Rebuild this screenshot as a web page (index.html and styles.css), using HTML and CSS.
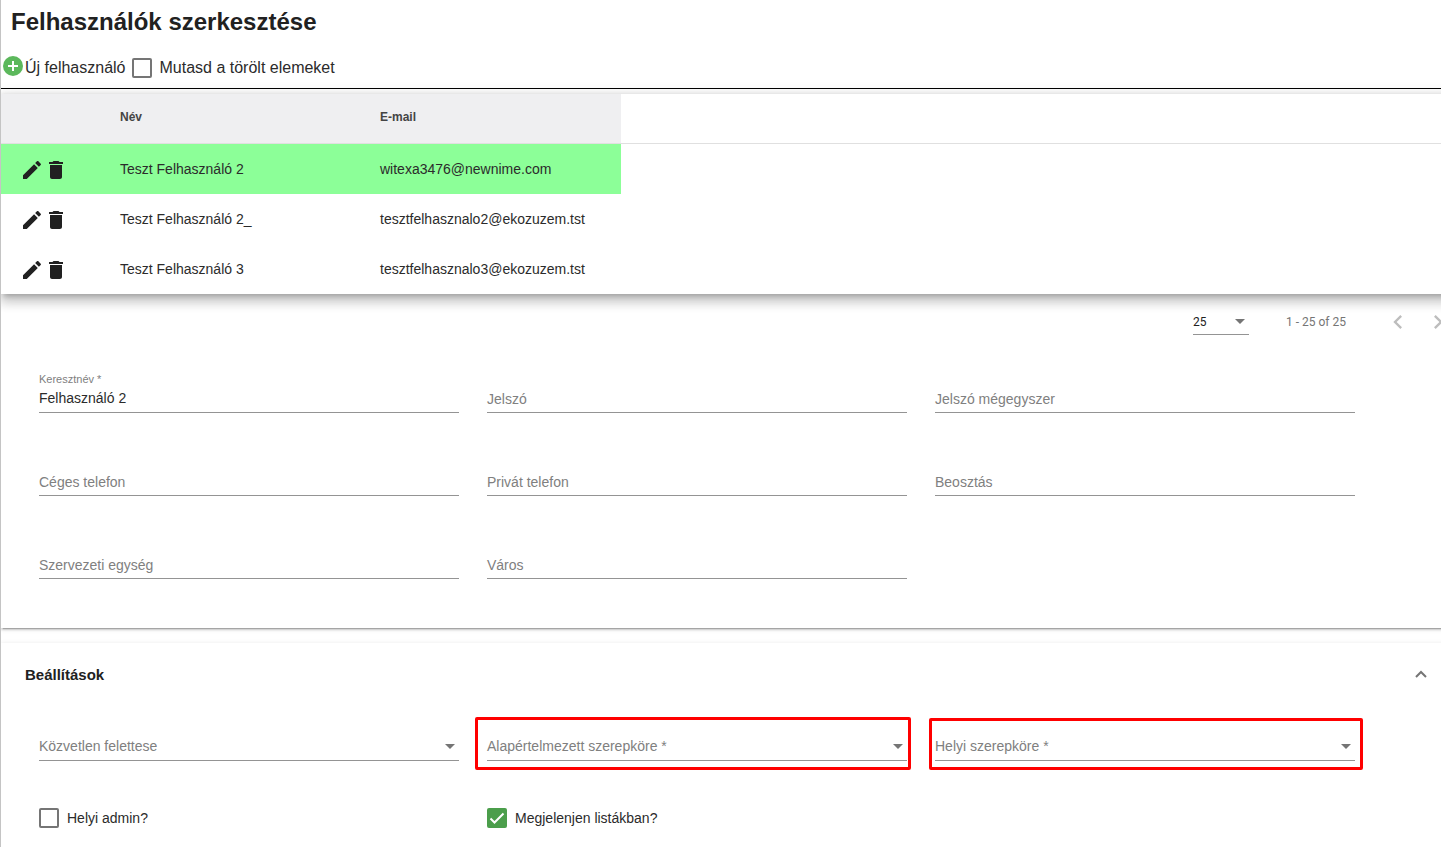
FILE: index.html
```html
<!DOCTYPE html>
<html lang="hu">
<head>
<meta charset="utf-8">
<meta name="viewport" content="width=device-width, initial-scale=1">
<title>Felhasználók szerkesztése</title>
<link rel="stylesheet" href="styles.css">
</head>
<body>
<svg class="sprite" aria-hidden="true">
  <symbol id="edit" viewBox="0 0 24 24"><path d="M3 17.25V21h3.75L17.81 9.94l-3.75-3.75L3 17.25zM20.71 7.04c.39-.39.39-1.02 0-1.41l-2.34-2.34c-.39-.39-1.02-.39-1.41 0l-1.83 1.83 3.75 3.75 1.83-1.83z"/></symbol>
  <symbol id="delete" viewBox="0 0 24 24"><path d="M6 19c0 1.100.9 2 2 2h8c1.100 0 2-.9 2-2V7H6v12zM19 4h-3.500l-1-1h-5l-1 1H5v2h14V4z"/></symbol>
  <symbol id="arrow" viewBox="0 0 10 5"><path d="M0 0h10L5 5z"/></symbol>
</svg>
<main class="page">
  <h1 class="title">Felhasználók szerkesztése</h1>
  <div class="toolbar">
    <button class="new-user" type="button">
      <svg class="plus" viewBox="0 0 20 20" aria-hidden="true"><circle cx="10" cy="10" r="10" fill="#5cb85c"/><path d="M10 5v10M5 10h10" stroke="#fff" stroke-width="2"/></svg>
      <span class="new-user-text">Új felhasználó</span>
    </button>
    <label class="check check-large"><input class="box" type="checkbox"><span>Mutasd a törölt elemeket</span></label>
  </div>

  <section class="card users">
    <div class="table-wrap">
      <table class="table">
        <thead>
          <tr><th class="col-actions"></th><th class="col-data">Név</th><th class="col-data">E-mail</th><td class="filler"></td></tr>
        </thead>
        <tbody>
          <tr class="selected">
            <td><div class="actions"><button type="button" class="icon-button" aria-label="Szerkesztés"><svg class="icon"><use href="#edit"/></svg></button><button type="button" class="icon-button" aria-label="Törlés"><svg class="icon"><use href="#delete"/></svg></button></div></td>
            <td>Teszt Felhasználó 2</td><td>witexa3476@newnime.com</td><td class="filler"></td>
          </tr>
          <tr>
            <td><div class="actions"><button type="button" class="icon-button" aria-label="Szerkesztés"><svg class="icon"><use href="#edit"/></svg></button><button type="button" class="icon-button" aria-label="Törlés"><svg class="icon"><use href="#delete"/></svg></button></div></td>
            <td>Teszt Felhasználó 2_</td><td>tesztfelhasznalo2@ekozuzem.tst</td><td class="filler"></td>
          </tr>
          <tr>
            <td><div class="actions"><button type="button" class="icon-button" aria-label="Szerkesztés"><svg class="icon"><use href="#edit"/></svg></button><button type="button" class="icon-button" aria-label="Törlés"><svg class="icon"><use href="#delete"/></svg></button></div></td>
            <td>Teszt Felhasználó 3</td><td>tesztfelhasznalo3@ekozuzem.tst</td><td class="filler"></td>
          </tr>
        </tbody>
      </table>
    </div>

    <div class="paginator">
      <div class="page-size">
        <select class="control" aria-label="Elemek oldalanként"><option>25</option></select>
        <svg class="arrow" aria-hidden="true"><use href="#arrow"/></svg>
      </div>
      <span class="range">1 - 25 of 25</span>
      <div class="pager">
        <button type="button" class="page-button" aria-label="Előző oldal" disabled><svg class="chevron" viewBox="0 0 24 24"><path d="M15.410 7.410L14 6l-6 6 6 6 1.410-1.410L10.830 12z"/></svg></button>
        <button type="button" class="page-button" aria-label="Következő oldal" disabled><svg class="chevron" viewBox="0 0 24 24"><path d="M10 6L8.590 7.410 13.170 12l-4.580 4.590L10 18l6-6z"/></svg></button>
      </div>
    </div>

    <form class="grid details">
      <div class="field filled"><label for="first-name">Keresztnév *</label><input class="control" id="first-name" type="text" value="Felhasználó 2"></div>
      <div class="field"><label for="password">Jelszó</label><input class="control" id="password" type="password"></div>
      <div class="field"><label for="password-again">Jelszó mégegyszer</label><input class="control" id="password-again" type="password"></div>
      <div class="field"><label for="work-phone">Céges telefon</label><input class="control" id="work-phone" type="tel"></div>
      <div class="field"><label for="private-phone">Privát telefon</label><input class="control" id="private-phone" type="tel"></div>
      <div class="field"><label for="position">Beosztás</label><input class="control" id="position" type="text"></div>
      <div class="field"><label for="unit">Szervezeti egység</label><input class="control" id="unit" type="text"></div>
      <div class="field"><label for="city">Város</label><input class="control" id="city" type="text"></div>
    </form>
  </section>

  <section class="card settings">
    <header class="settings-head">
      <h2 class="subtitle">Beállítások</h2>
      <button type="button" class="collapse" aria-label="Összecsukás"><svg viewBox="0 0 12 8" class="collapse-icon"><path d="M1 7l5-5 5 5" fill="none" stroke="#757575" stroke-width="2"/></svg></button>
    </header>
    <form class="grid roles">
      <div class="field"><label for="manager">Közvetlen felettese</label><select class="control" id="manager"><option></option></select><svg class="arrow" aria-hidden="true"><use href="#arrow"/></svg></div>
      <div class="field marked"><label for="default-role">Alapértelmezett szerepköre *</label><select class="control" id="default-role"><option></option></select><svg class="arrow" aria-hidden="true"><use href="#arrow"/></svg></div>
      <div class="field marked marked-last"><label for="local-role">Helyi szerepköre *</label><select class="control" id="local-role"><option></option></select><svg class="arrow" aria-hidden="true"><use href="#arrow"/></svg></div>
      <label class="check"><input class="box" type="checkbox"><span>Helyi admin?</span></label>
      <label class="check"><span class="tick-box"><input class="box" type="checkbox" checked><svg class="tick" viewBox="0 0 20 20" aria-hidden="true"><path d="M3.500 10.500l4 4 9-9" fill="none" stroke="#fff" stroke-width="2"/></svg></span><span>Megjelenjen listákban?</span></label>
    </form>
  </section>
</main>
</body>
</html>
```
FILE: styles.css
```css
* {
  box-sizing: border-box;
}

body {
  margin: 0;
  background: #fff;
  color: #2b2b2b;
  font-family: "Liberation Sans", Arial, sans-serif;
  font-size: 14px;
  line-height: 20px;
}

button,
input,
select {
  margin: 0;
  padding: 0;
  border: 0;
  background: none;
  color: inherit;
  font: inherit;
}

.sprite {
  display: none;
}

.page {
  min-height: 100vh;
  border-left: 1px solid #c4c4c4;
  overflow: hidden;
}

.title {
  margin: 0;
  padding: 6px 10px;
  color: #212121;
  font-size: 24px;
  line-height: 32px;
}

.toolbar {
  display: flex;
  align-items: center;
  gap: 6px;
  height: 45px;
  padding-left: 2px;
  border-bottom: 1px solid #000;
  font-size: 16px;
}

.new-user {
  display: flex;
  align-items: center;
  gap: 2px;
}

.new-user-text {
  padding-top: 4px;
}

.plus {
  width: 20px;
  height: 20px;
}

.check {
  display: flex;
  align-items: center;
  gap: 8px;
}

.check-large {
  padding-top: 4px;
}

.box {
  display: block;
  flex: none;
  width: 20px;
  height: 20px;
  border: 2px solid #757575;
  border-radius: 2px;
  appearance: none;
}

.box:checked {
  border-color: #4b9e4b;
  background: #4b9e4b;
}

.tick-box {
  display: grid;
}

.tick-box > * {
  grid-area: 1 / 1;
}

.tick {
  width: 20px;
  height: 20px;
  pointer-events: none;
}

/* Cards run a little past the right edge of the page, which clips them. */
.card {
  margin-right: -17px;
  background: #fff;
  box-shadow: 0 3px 1px -2px rgba(0, 0, 0, .2), 0 2px 2px rgba(0, 0, 0, .14), 0 1px 5px rgba(0, 0, 0, .12);
}

.users {
  margin-top: 5px;
}

.table-wrap {
  box-shadow: 0 5px 5px -3px rgba(0, 0, 0, .2), 0 8px 10px 1px rgba(0, 0, 0, .14), 0 3px 14px 2px rgba(0, 0, 0, .12);
  background: #fff;
}

.table {
  width: 100%;
  table-layout: fixed;
  border-collapse: separate;
  border-spacing: 0;
}

.table th,
.table td {
  height: 50px;
  padding: 0 19px;
  text-align: left;
}

.table th {
  background: #efeff1;
  color: #444;
  font-size: 12px;
}

.table thead th,
.table thead td {
  padding-bottom: 4px;
  border-bottom: 1px solid #e0e0e0;
}

.col-actions {
  width: 100px;
}

.col-data {
  width: 260px;
}

.selected td {
  background: #8cff98;
}

.table .filler {
  background: #fff;
}

.actions {
  display: flex;
  padding-top: 2px;
}

.icon-button,
.icon {
  display: block;
  width: 24px;
  height: 24px;
}

.icon {
  fill: #212121;
}

.paginator {
  display: flex;
  align-items: center;
  justify-content: flex-end;
  height: 56px;
  color: #757575;
  font-family: Roboto, sans-serif;
  font-size: 12px;
}

.page-size {
  display: grid;
  align-items: center;
  width: 56px;
  border-bottom: 1px solid #949494;
  margin-right: 37px;
  color: #212121;
}

.page-size > * {
  grid-area: 1 / 1;
}

.page-size .control {
  height: 24px;
  border: 0;
}

.range {
  margin-right: 32px;
}

.pager {
  display: flex;
}

.page-button {
  display: grid;
  place-items: center;
  width: 40px;
  height: 40px;
}

.chevron {
  width: 28px;
  height: 28px;
  fill: #bdbdbd;
}

.grid {
  display: grid;
  grid-template-columns: repeat(3, 1fr);
  column-gap: 28px;
  padding: 0 103px 0 38px;
}

.details {
  row-gap: 58px;
  padding-top: 38px;
  padding-bottom: 49px;
}

.field {
  position: relative;
  display: grid;
  align-items: center;
}

.field > * {
  grid-area: 1 / 1;
}

.field label {
  padding-bottom: 3px;
  color: #808080;
  pointer-events: none;
}

.control {
  width: 100%;
  height: 25px;
  border-bottom: 1px solid #949494;
  border-radius: 0;
  outline: 0;
  appearance: none;
}

.field .control {
  padding-bottom: 4px;
}

.field.filled label {
  position: absolute;
  top: -19px;
  padding: 0;
  font-size: 11px;
}

.arrow {
  justify-self: end;
  width: 10px;
  height: 5px;
  margin-right: 4px;
  fill: #757575;
  pointer-events: none;
}

.settings {
  margin-top: 15px;
}

.settings-head {
  display: flex;
  align-items: center;
  justify-content: space-between;
  height: 64px;
  padding: 0 31px 0 24px;
}

.subtitle {
  margin: 0;
  color: #212121;
  font-size: 15px;
}

.collapse {
  padding-bottom: 2px;
}

.collapse-icon {
  display: block;
  width: 12px;
  height: 8px;
}

.roles {
  row-gap: 47px;
  padding-top: 29px;
  padding-bottom: 24px;
}

.roles .field label {
  padding-bottom: 5px;
}

.roles .arrow {
  margin-bottom: 4px;
}

.marked::after {
  position: absolute;
  inset: -19px -4px -9px -12px;
  border: 3px solid #f00;
  border-radius: 2px;
  content: "";
  pointer-events: none;
}

.marked-last::after {
  inset: -18px -8px -9px -6px;
}
```
